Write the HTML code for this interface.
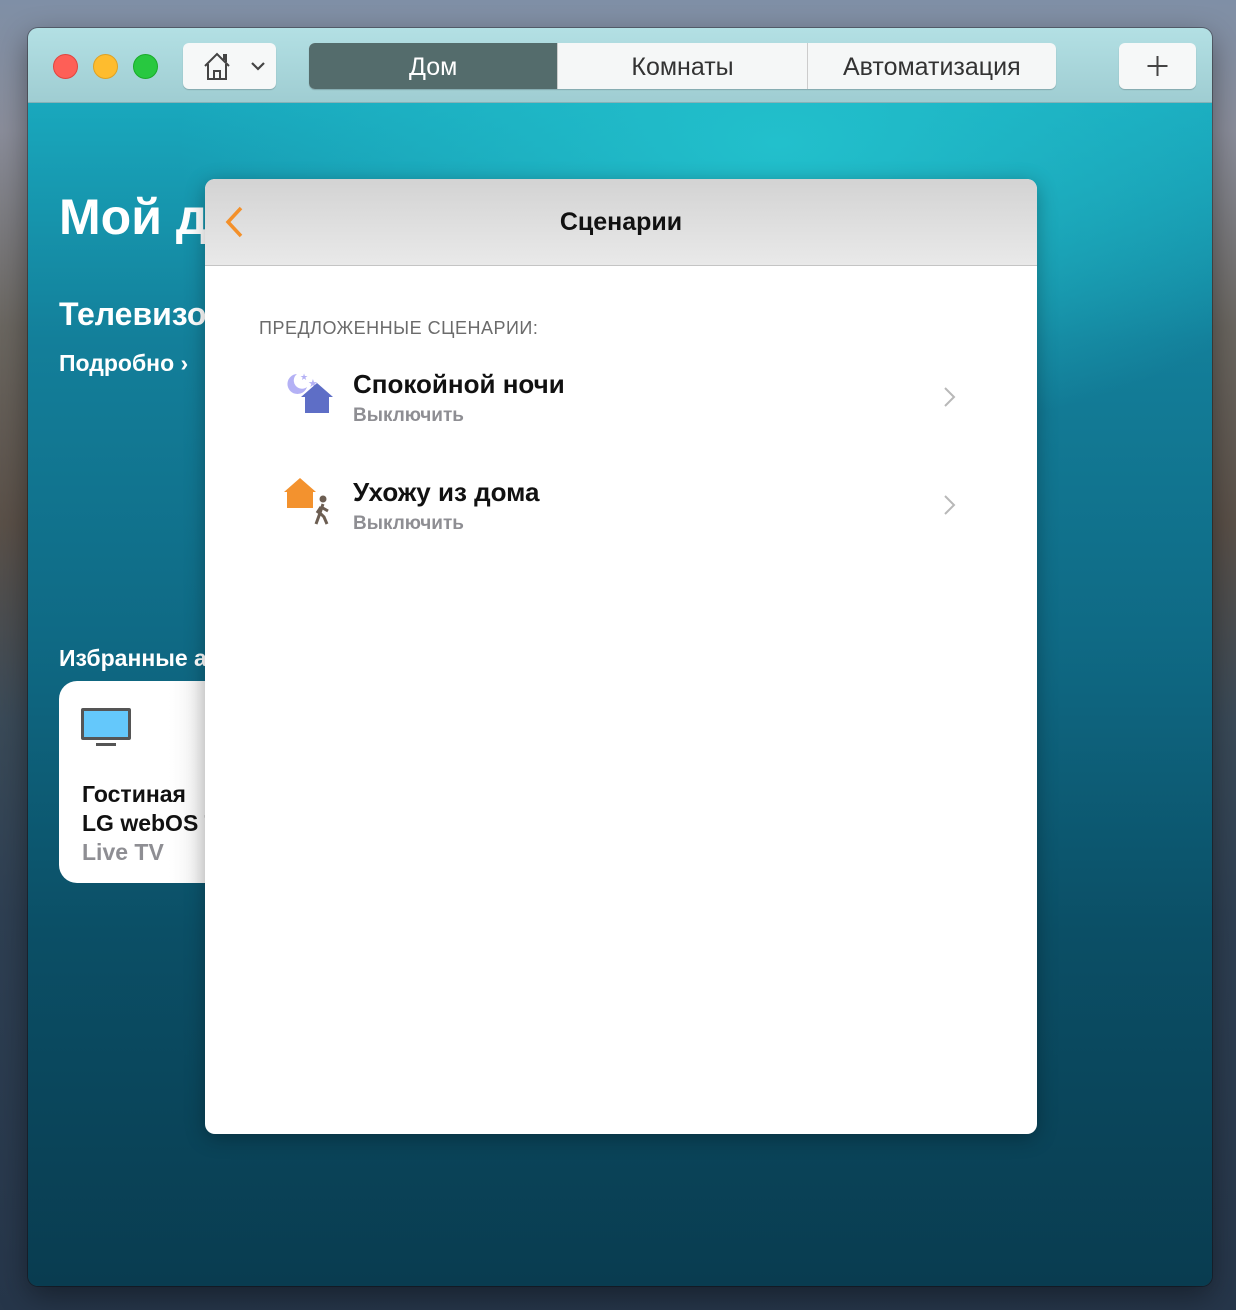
<!DOCTYPE html>
<html><head><meta charset="utf-8"><style>
*{margin:0;padding:0;box-sizing:border-box}
body{width:1236px;height:1310px;overflow:hidden;font-family:"Liberation Sans","DejaVu Sans",sans-serif;position:relative;
background:linear-gradient(180deg,#7f8fa6 0%,#8a8d9a 10%,#6a6660 25%,#5a5048 40%,#3a4a58 55%,#2e3f52 70%,#26364a 100%);}
.win{position:absolute;left:28px;top:28px;width:1184px;height:1258px;border-radius:10px;overflow:hidden;box-shadow:0 0 0 1px rgba(0,0,0,.3),0 10px 30px rgba(0,0,0,.4)}
.tb{position:absolute;left:0;top:0;width:100%;height:75px;background:linear-gradient(180deg,#b3e0e4,#9fcdd2);border-bottom:1px solid #86b2b8}
.content{position:absolute;left:0;top:75px;width:100%;height:1183px;
background:radial-gradient(ellipse 600px 300px at 750px 40px,#22c0cc 0%,rgba(34,192,204,0) 100%),linear-gradient(180deg,#19a8bd 0%,#137f9a 20%,#0f6a85 45%,#0b4f66 70%,#093c50 100%)}
.dot{position:absolute;top:26px;width:25px;height:25px;border-radius:50%}
.btn{position:absolute;background:#f6f8f8;border-radius:6px;box-shadow:0 1px 1px rgba(0,0,0,.2)}
.seg{position:absolute;left:281px;top:15px;width:747px;height:46px;border-radius:6px;background:#f5f7f7;box-shadow:0 1px 1px rgba(0,0,0,.2);display:flex;overflow:hidden}
.seg div{flex:1;text-align:center;line-height:48px;font-size:25px;color:#333;border-left:1px solid #ccc}
.seg div:first-child{background:#546c6c;color:#fff;border:none}
.w{position:absolute;color:#fff;font-weight:bold;white-space:nowrap}
.card{position:absolute;left:31px;top:578px;width:200px;height:202px;border-radius:18px;background:linear-gradient(90deg,#fff 55%,#ddd)}
.sheet{position:absolute;left:177px;top:151px;width:832px;height:955px;background:#fff;border-radius:10px;overflow:hidden;box-shadow:0 4px 20px rgba(0,0,0,.3)}
.sh{height:87px;background:linear-gradient(180deg,#d3d3d3,#e9e9e9);border-bottom:1px solid #c4c4c4;position:relative}
.row{position:absolute;left:0;width:100%;height:70px}
.t1{position:absolute;left:148px;font-size:26px;font-weight:bold;color:#111}
.t2{position:absolute;left:148px;font-size:19px;font-weight:bold;color:#8e8e93}
</style></head><body>
<div class="win">
<div class="tb">
<div class="dot" style="left:25px;background:#fe5f57;border:1px solid #e0443e"></div>
<div class="dot" style="left:65px;background:#febc2e;border:1px solid #dea123"></div>
<div class="dot" style="left:105px;background:#28c840;border:1px solid #1aab29"></div>
<div class="btn" style="left:155px;top:15px;width:93px;height:46px">
<svg width="93" height="46"><path d="M22 23 L34 11 L46 23 M25 21 V36 H43 V21 M31 36 V28 H37 V36 M41 17 V12 H43 V19" fill="none" stroke="#444" stroke-width="2"/><path d="M69 20 L75 26 L81 20" fill="none" stroke="#444" stroke-width="2.2"/></svg></div>
<div class="seg"><div>Дом</div><div>Комнаты</div><div>Автоматизация</div></div>
<div class="btn" style="left:1091px;top:15px;width:77px;height:46px"><svg width="77" height="46"><path d="M38.5 13V33M28.5 23H48.5" stroke="#444" stroke-width="2"/></svg></div>
</div>
<div class="content">
<div class="w" style="left:31px;top:85px;font-size:50px">Мой дом</div>
<div class="w" style="left:31px;top:193px;font-size:32px">Телевизор</div>
<div class="w" style="left:31px;top:247px;font-size:23px">Подробно ›</div>
<div class="w" style="left:31px;top:542px;font-size:23px">Избранные аксессуары</div>
<div class="card">
<div style="position:absolute;left:22px;top:27px;width:50px;height:32px;background:#64c8fb;border:3px solid #555;border-radius:2px"></div>
<div style="position:absolute;left:37px;top:62px;width:20px;height:3px;background:#555"></div>
<div style="position:absolute;left:23px;top:99px;font-size:23px;font-weight:bold;line-height:29px;color:#111;white-space:nowrap">Гостиная<br>LG webOS TV<br><span style="color:#8e8e93">Live TV</span></div>
</div>
</div>
<div class="sheet">
<div class="sh"><svg style="position:absolute;left:18px;top:26px" width="24" height="36"><path d="M18 3 L5 17 L18 31" fill="none" stroke="#f3902a" stroke-width="3.5"/></svg>
<div style="position:absolute;width:100%;text-align:center;top:29px;font-size:25px;font-weight:bold;color:#111">Сценарии</div></div>
<div style="position:absolute;left:54px;top:139px;font-size:18px;color:#6b6b6b;letter-spacing:.5px">ПРЕДЛОЖЕННЫЕ СЦЕНАРИИ:</div>
<div class="row" style="top:190px">
<svg style="position:absolute;left:78px;top:2px" width="54" height="54"><path d="M14 3 A10 10 0 1 0 24 16 A8 8 0 0 1 14 3Z" fill="#b4b1f5"/><text x="17" y="9" font-size="9" fill="#b4b1f5">★</text><text x="25" y="16" font-size="11" fill="#b4b1f5">★</text><path d="M18 26 L34 12 L50 26 H46 V42 H22 V26Z" fill="#5e6ec6"/></svg>
<div class="t1" style="top:0">Спокойной ночи</div><div class="t2" style="top:36px">Выключить</div>
<svg style="position:absolute;left:738px;top:17px" width="14" height="22"><path d="M2 2 L11 11 L2 20" fill="none" stroke="#b8b8b8" stroke-width="2"/></svg></div>
<div class="row" style="top:298px">
<svg style="position:absolute;left:78px;top:0px" width="54" height="56"><path d="M1 15 L17 1 L33 15 H30 V31 H4 V15Z" fill="#f3922e"/><circle cx="40" cy="22" r="3.5" fill="#6c5e52"/><path d="M40 27 L37 36 L33 47 M37 36 L41 40 L44 47 M38 30 L45 34 M38 30 L34 36" fill="none" stroke="#6c5e52" stroke-width="3"/></svg>
<div class="t1" style="top:0">Ухожу из дома</div><div class="t2" style="top:36px">Выключить</div>
<svg style="position:absolute;left:738px;top:17px" width="14" height="22"><path d="M2 2 L11 11 L2 20" fill="none" stroke="#b8b8b8" stroke-width="2"/></svg></div>
</div>
</div>
</body></html>
